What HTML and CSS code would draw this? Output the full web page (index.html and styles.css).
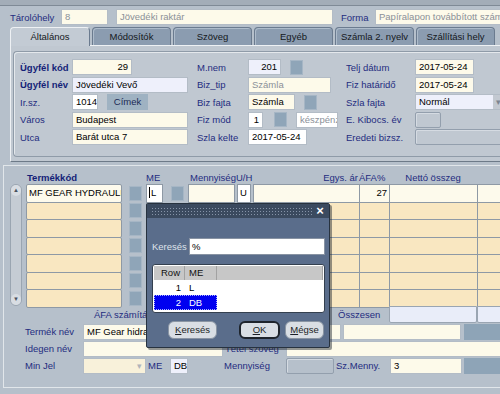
FILE: index.html
```html
<!DOCTYPE html>
<html lang="hu">
<head>
  <meta charset="UTF-8">
  <title>Számla</title>
  <link rel="stylesheet" href="styles.css">
</head>
<body>
  <div class="screen">
    <div class="topbar"></div>

    <!-- Fejléc -->
    <div class="head">
      <span class="lbl w51">Tárolóhely</span>
      <span class="fld dim w47">8</span>
      <span class="fld dim w217 ml8">Jövedéki raktár</span>
      <span class="lbl w34 ml8">Forma</span>
      <span class="fld dim w130">Papíralapon továbbított számla</span>
    </div>

    <div class="tabs">
      <div class="tab on">Általános</div>
      <div class="tab">Módosítók</div>
      <div class="tab">Szöveg</div>
      <div class="tab">Egyéb</div>
      <div class="tab">Számla 2. nyelv</div>
      <div class="tab">Szállítási hely</div>
    </div>

    <div class="tabpanel">
      <div class="group">
        <div class="frow">
          <span class="lbl b">Ügyfél kód</span>
          <div class="cell"><span class="fld num w60">29</span></div>
          <span class="lbl">M.nem</span>
          <div class="cell"><span class="fld num lav w33">201</span><span class="sq ml9"></span></div>
          <span class="lbl">Telj dátum</span>
          <div class="cell"><span class="fld w59">2017-05-24</span></div>
        </div>
        <div class="frow">
          <span class="lbl b">Ügyfél név</span>
          <div class="cell"><span class="fld lav w116">Jövedéki Vevő</span></div>
          <span class="lbl">Biz_tip</span>
          <div class="cell"><span class="fld dim w83">Számla</span></div>
          <span class="lbl">Fiz határidő</span>
          <div class="cell"><span class="fld w59">2017-05-24</span></div>
        </div>
        <div class="frow">
          <span class="lbl">Ir.sz.</span>
          <div class="cell"><span class="fld white w26">1014</span><span class="btn-cimek">Címek</span></div>
          <span class="lbl">Biz fajta</span>
          <div class="cell"><span class="fld w47">Számla</span><span class="sq ml9"></span></div>
          <span class="lbl">Szla fajta</span>
          <div class="cell"><span class="sel lav w90">Normál<i class="arrow">▾</i></span></div>
        </div>
        <div class="frow">
          <span class="lbl">Város</span>
          <div class="cell"><span class="fld w116">Budapest</span></div>
          <span class="lbl">Fiz mód</span>
          <div class="cell"><span class="fld num white w15">1</span><span class="sq ml11"></span><span class="fld dim white w42 ml9">készpénz</span></div>
          <span class="lbl">E. Kibocs. év</span>
          <div class="cell"><span class="fld off w26"></span></div>
        </div>
        <div class="frow">
          <span class="lbl">Utca</span>
          <div class="cell"><span class="fld w116">Barát utca 7</span></div>
          <span class="lbl">Szla kelte</span>
          <div class="cell"><span class="fld white w59">2017-05-24</span></div>
          <span class="lbl">Eredeti bizsz.</span>
          <div class="cell"><span class="fld off w90"></span></div>
        </div>
      </div>
    </div>

    <!-- Tételek -->
    <div class="lower">
      <div class="lhead">
        <span class="h-code lbl b">Termékkód</span>
        <span class="h-me lbl">ME</span>
        <span class="h-menny lbl">MennyiségU/H</span>
        <span class="h-ar lbl">Egys. ár</span>
        <span class="h-afa lbl">ÁFA%</span>
        <span class="h-net lbl">Nettó összeg</span>
      </div>

      <div class="grid">
        <div class="sbar">
          <span class="sbtn">▲</span>
          <span class="sbtn">▼</span>
        </div>
        <div class="rows">
          <div class="lrow first">
            <span class="c c-code">MF GEAR HYDRAULIKA</span>
            <span class="c-sq"></span>
            <span class="c c-me"><i class="caret"></i>L</span>
            <span class="c-sq"></span>
            <span class="c c-menny"></span>
            <span class="c c-uh">U</span>
            <span class="c c-ar"></span>
            <span class="c c-afa">27</span>
            <span class="c c-net"></span>
            <span class="c c-x"></span>
          </div>
          <div class="lrow">
            <span class="c c-code"></span><span class="c-sq"></span><span class="c c-me"></span><span class="c-sq"></span>
            <span class="c c-menny"></span><span class="c c-uh"></span><span class="c c-ar"></span><span class="c c-afa"></span><span class="c c-net"></span><span class="c c-x"></span>
          </div>
          <div class="lrow">
            <span class="c c-code"></span><span class="c-sq"></span><span class="c c-me"></span><span class="c-sq"></span>
            <span class="c c-menny"></span><span class="c c-uh"></span><span class="c c-ar"></span><span class="c c-afa"></span><span class="c c-net"></span><span class="c c-x"></span>
          </div>
          <div class="lrow">
            <span class="c c-code"></span><span class="c-sq"></span><span class="c c-me"></span><span class="c-sq"></span>
            <span class="c c-menny"></span><span class="c c-uh"></span><span class="c c-ar"></span><span class="c c-afa"></span><span class="c c-net"></span><span class="c c-x"></span>
          </div>
          <div class="lrow">
            <span class="c c-code"></span><span class="c-sq"></span><span class="c c-me"></span><span class="c-sq"></span>
            <span class="c c-menny"></span><span class="c c-uh"></span><span class="c c-ar"></span><span class="c c-afa"></span><span class="c c-net"></span><span class="c c-x"></span>
          </div>
          <div class="lrow">
            <span class="c c-code"></span><span class="c-sq"></span><span class="c c-me"></span><span class="c-sq"></span>
            <span class="c c-menny"></span><span class="c c-uh"></span><span class="c c-ar"></span><span class="c c-afa"></span><span class="c c-net"></span><span class="c c-x"></span>
          </div>
          <div class="lrow">
            <span class="c c-code"></span><span class="c-sq"></span><span class="c c-me"></span><span class="c-sq"></span>
            <span class="c c-menny"></span><span class="c c-uh"></span><span class="c c-ar"></span><span class="c c-afa"></span><span class="c c-net"></span><span class="c c-x"></span>
          </div>
        </div>
      </div>

      <div class="totals">
        <span class="lbl t-afa">ÁFA számítás</span>
        <span class="lbl t-ossz">Összesen</span>
        <span class="fld tot w88"></span>
        <span class="fld tot w40"></span>
      </div>

      <div class="drow">
        <span class="lbl w58">Termék név</span>
        <span class="fld w258">MF Gear hidraulika olaj</span>
        <span class="fld w118 ml2"></span>
        <span class="blk ml3"></span>
      </div>
      <div class="drow">
        <span class="lbl w58">Idegen név</span>
        <span class="fld w140"></span>
        <span class="lbl w63 pl2">Tétel szöveg</span>
        <span class="fld w220"></span>
      </div>
      <div class="drow">
        <span class="lbl w58">Min Jel</span>
        <span class="sel dis w63"><i class="arrow">▾</i></span>
        <span class="lbl w24 pl2">ME</span>
        <span class="fld lav w18">DB</span>
        <span class="lbl w62 ml36">Mennyiség</span>
        <span class="fld off w48"></span>
        <span class="lbl w56 pl2">Sz.Menny.</span>
        <span class="fld w72">3</span>
        <span class="blk ml2"></span>
      </div>
    </div>

    <!-- LOV ablak -->
    <div class="dialog">
      <div class="dtitle"><span class="grip"></span><span class="close">×</span></div>
      <div class="dsearch">
        <span class="dlbl">Keresés</span>
        <span class="dinput">%</span>
      </div>
      <div class="list">
        <div class="lh"><span class="col-row">Row</span><span class="col-me">ME</span><span class="col-rest"></span></div>
        <div class="li"><span class="col-row">1</span><span class="col-me">L</span></div>
        <div class="li sel-row"><span class="col-row">2</span><span class="col-me">DB</span></div>
      </div>
      <div class="dbtns">
        <span class="dbtn b-ker"><u>K</u>eresés</span>
        <span class="dbtn b-ok"><u>O</u>K</span>
        <span class="dbtn b-meg"><u>M</u>égse</span>
      </div>
    </div>
  </div>
</body>
</html>
```

FILE: styles.css
```css
* {
  box-sizing: border-box;
}
body {
  margin: 0;
  font-family: "Liberation Sans", Arial, sans-serif;
  font-size: 9.5px;
  background-color: #b6c0cb;
}
.screen {
  position: relative;
  width: 500px;
  height: 394px;
  overflow: hidden;
  background-color: #b6c0cb;
}
.topbar {
  height: 6px;
  background-color: #a3adb8;
  border-bottom: 1px solid #7f8a96;
}
.lbl {
  color: #1f2c80;
  white-space: nowrap;
  flex: none;
}
.lbl.b {
  font-weight: bold;
  color: #141f78;
}
.fld {
  display: block;
  flex: none;
  height: 16px;
  line-height: 14px;
  padding: 0 3px;
  border: 1px solid #b3bcc6;
  background-color: #fdfaea;
  color: #000;
  white-space: nowrap;
  overflow: hidden;
}
.fld.dim { color: #8b9098; }
.fld.num { text-align: right; }
.fld.white { background-color: #fff; }
.fld.lav { background-color: #eef0fb; }
.fld.off {
  background-color: transparent;
  border-color: #939fad;
  border-radius: 2px;
  box-shadow: inset 1px 1px 0 #d5dbe2;
}
.fld.tot {
  height: 17px;
  background-color: #e9edf9;
  border-color: #9aa5b2;
  border-radius: 0 0 2px 2px;
}
.sq {
  display: block;
  flex: none;
  width: 13px;
  height: 15px;
  background-color: #8fa5b8;
  border: 1px solid #a6b6c5;
}
.blk {
  display: block;
  flex: none;
  width: 40px;
  height: 16px;
  background-color: #8ea4b7;
}
.sel {
  position: relative;
  display: block;
  flex: none;
  height: 16px;
  line-height: 14px;
  padding: 0 3px;
  border: 1px solid #b3bcc6;
  color: #000;
}
.sel.lav { background-color: #eef0fb; }
.sel.dis { background-color: #f8f1da; }
.sel .arrow {
  position: absolute;
  right: 0;
  top: 0;
  width: 11px;
  height: 14px;
  background-color: #c3c9d1;
  color: #7d8590;
  font-style: normal;
  font-size: 9px;
  text-align: center;
}
.sel.dis .arrow {
  background-color: transparent;
  color: #b0b4ba;
}

/* widths */
.w15 { width: 15px; } .w18 { width: 18px; } .w24 { width: 24px; } .w26 { width: 26px; }
.w33 { width: 33px; } .w34 { width: 34px; } .w40 { width: 40px; } .w42 { width: 42px; }
.w47 { width: 47px; } .w48 { width: 48px; } .w51 { width: 51px; } .w56 { width: 56px; }
.w58 { width: 58px; } .w59 { width: 59px; } .w60 { width: 60px; } .w62 { width: 62px; }
.w63 { width: 63px; } .w72 { width: 72px; } .w83 { width: 83px; } .w88 { width: 88px; }
.w90 { width: 90px; } .w116 { width: 116px; } .w118 { width: 118px; } .w130 { width: 130px; }
.w140 { width: 140px; } .w217 { width: 217px; } .w220 { width: 220px; } .w258 { width: 258px; }
.ml2 { margin-left: 2px; } .ml3 { margin-left: 3px; } .ml8 { margin-left: 8px; }
.ml9 { margin-left: 9px; } .ml11 { margin-left: 11px; } .ml36 { margin-left: 36px; }
.pl2 { padding-left: 2px; }

/* fejléc */
.head {
  display: flex;
  align-items: center;
  height: 16px;
  margin: 3px 0 0 10px;
}
.tabs {
  display: flex;
  align-items: flex-end;
  gap: 2px;
  height: 18px;
  margin: 2px 0 0 10px;
}
.tab {
  flex: none;
  width: 79px;
  height: 18px;
  line-height: 17px;
  text-align: center;
  color: #141820;
  background-color: #8b9cb0;
  border: 1px solid #6b7b8f;
  border-bottom: none;
  border-radius: 4px 4px 0 0;
  box-shadow: inset 1px 1px 0 #aebccb;
  white-space: nowrap;
}
.tab.on {
  position: relative;
  z-index: 1;
  width: 80px;
  height: 19px;
  margin-bottom: -1px;
  background-color: #c3cbd4;
  border-color: #eef1f4;
  border-right-color: #6b7b8f;
  box-shadow: none;
}
.tabpanel {
  height: 117px;
  margin-left: 10px;
  padding: 5px 0 0 2px;
  background-color: #c0c8d1;
  border-top: 1px solid #eef1f4;
  border-left: 1px solid #eef1f4;
  border-bottom: 1px solid #6d7a88;
}
.group {
  display: flex;
  flex-direction: column;
  gap: 1.5px;
  height: 106px;
  padding: 7px 0 0 6px;
  border: 1px solid #8f9ba8;
  border-right: none;
  border-radius: 4px 0 0 4px;
  box-shadow: inset 1px 1px 0 #e4e8ec;
}
.frow {
  display: grid;
  grid-template-columns: 52px 125px 51px 98px 69px 1fr;
  align-items: center;
  height: 16px;
}
.cell {
  display: flex;
  align-items: center;
  height: 16px;
}
.btn-cimek {
  display: block;
  width: 41px;
  height: 16px;
  margin-left: 9px;
  line-height: 16px;
  text-align: center;
  background-color: #9fb2c2;
  color: #1b2a55;
}

/* tételek */
.lower {
  height: 223px;
  margin: 3px 0 0 3px;
  padding: 4px 0 0 6px;
  border-top: 1px solid #e1e6ea;
  border-left: 1px solid #e1e6ea;
  border-bottom: 1px solid #e1e6ea;
}
.lhead {
  display: flex;
  align-items: flex-end;
  height: 14px;
  padding-bottom: 1px;
}
.h-code { width: 136px; padding-left: 17px; }
.h-me { width: 42px; }
.h-menny { width: 65px; padding-left: 2px; }
.h-ar { width: 106px; text-align: right; padding-right: 1px; }
.h-afa { width: 30px; }
.h-net { width: 88px; text-align: center; }
.grid {
  display: flex;
}
.sbar {
  display: flex;
  flex-direction: column;
  justify-content: space-between;
  flex: none;
  width: 12px;
  height: 122px;
  margin-right: 4px;
  background-color: #c5ccd4;
  border: 1px solid #9aa5b1;
  border-radius: 6px;
}
.sbtn {
  display: block;
  height: 11px;
  font-size: 6px;
  line-height: 11px;
  text-align: center;
  color: #49525e;
  border-radius: 5px;
  background-color: #d8dde3;
}
.rows {
  display: flex;
  flex-direction: column;
}
.lrow {
  display: flex;
  align-items: center;
  height: 18.5px;
  margin-bottom: -1px;
}
.c {
  display: block;
  flex: none;
  height: 18.5px;
  line-height: 16px;
  padding: 0 2px;
  border: 1px solid #8e99a5;
  background-color: #f9e7c1;
  color: #000;
  white-space: nowrap;
  overflow: hidden;
}
.first .c { background-color: #fdfaec; }
.c-code { width: 96px; margin-right: 7px; border-radius: 2px; }
.c-sq {
  display: block;
  flex: none;
  width: 13px;
  height: 15px;
  margin-right: 4px;
  background-color: #8fa5b8;
  border: 1px solid #a6b6c5;
}
.c-me { width: 17px; margin-right: 8px; }
.first .c-me { background-color: #fff; }
.caret {
  display: inline-block;
  width: 1px;
  height: 11px;
  margin-right: 1px;
  vertical-align: -2px;
  background-color: #000;
}
.c-menny { width: 47px; margin-right: 2px; }
.c-uh { width: 14px; margin-right: 2px; }
.first .c-uh { background-color: #fff; }
.c-ar { width: 107px; }
.c-afa { width: 31px; margin-left: -1px; text-align: right; }
.c-net { width: 89px; margin-left: -1px; }
.c-x { width: 40px; margin-left: -1px; }
.totals {
  display: flex;
  align-items: center;
  height: 17px;
  margin-top: -1px;
}
.t-afa { width: 328px; padding-left: 84px; }
.t-ossz { width: 51px; }
.drow {
  display: flex;
  align-items: center;
  height: 16px;
  margin-top: 1px;
  padding-left: 15px;
}

/* LOV ablak */
.dialog {
  position: absolute;
  left: 146px;
  top: 203px;
  width: 184px;
  height: 145px;
  background-color: #5a6d8b;
  border: 1px solid #27323f;
  border-radius: 2px;
  box-shadow: 2px 2px 0 rgba(20, 28, 40, 0.45);
}
.dtitle {
  display: flex;
  align-items: center;
  height: 14px;
  padding: 0 3px 0 4px;
  background-color: #3b4a5f;
}
.grip {
  flex: 1;
  height: 8px;
  background-image: radial-gradient(circle, #8593a8 0.8px, transparent 1px);
  background-size: 3px 3px;
}
.close {
  width: 12px;
  margin-left: 2px;
  color: #fff;
  font-size: 13px;
  font-weight: bold;
  line-height: 14px;
  text-align: center;
}
.dsearch {
  display: flex;
  align-items: center;
  height: 17px;
  margin: 20px 0 0 5px;
}
.dlbl {
  width: 37px;
  color: #dfe3ea;
}
.dinput {
  display: block;
  width: 136px;
  height: 17px;
  line-height: 15px;
  padding: 0 2px;
  background-color: #fff;
  border: 1px solid #8893a3;
  color: #000;
}
.list {
  width: 173px;
  height: 49px;
  margin: 9px 0 0 5px;
  padding: 1px;
  background-color: #fff;
  border: 1px solid #34404f;
  border-radius: 3px;
}
.lh {
  display: flex;
  height: 14px;
  line-height: 14px;
  background-color: #c7c7c7;
  color: #111;
}
.lh span {
  border-right: 1px solid #a2a2a2;
}
.col-row {
  display: block;
  width: 31px;
  padding-right: 4px;
  text-align: right;
}
.col-me {
  display: block;
  width: 32px;
  padding-left: 4px;
}
.col-rest {
  flex: 1;
}
.li {
  display: flex;
  height: 15px;
  line-height: 15px;
  color: #000;
}
.li.sel-row {
  width: 63px;
  background-color: #0000f0;
  color: #fff;
  outline: 1px dotted #aab4ff;
  outline-offset: -1px;
}
.dbtns {
  display: flex;
  margin: 8px 0 0 21px;
}
.dbtn {
  display: block;
  height: 18px;
  line-height: 16px;
  text-align: center;
  background-color: #d9dee4;
  border: 1px solid #8a95a3;
  border-radius: 6px;
  color: #1b1f26;
}
.b-ker { width: 49px; }
.b-ok {
  width: 41px;
  margin-left: 22px;
  border: 2px solid #1e242c;
  line-height: 14px;
}
.b-meg { width: 39px; margin-left: 5px; }
```
